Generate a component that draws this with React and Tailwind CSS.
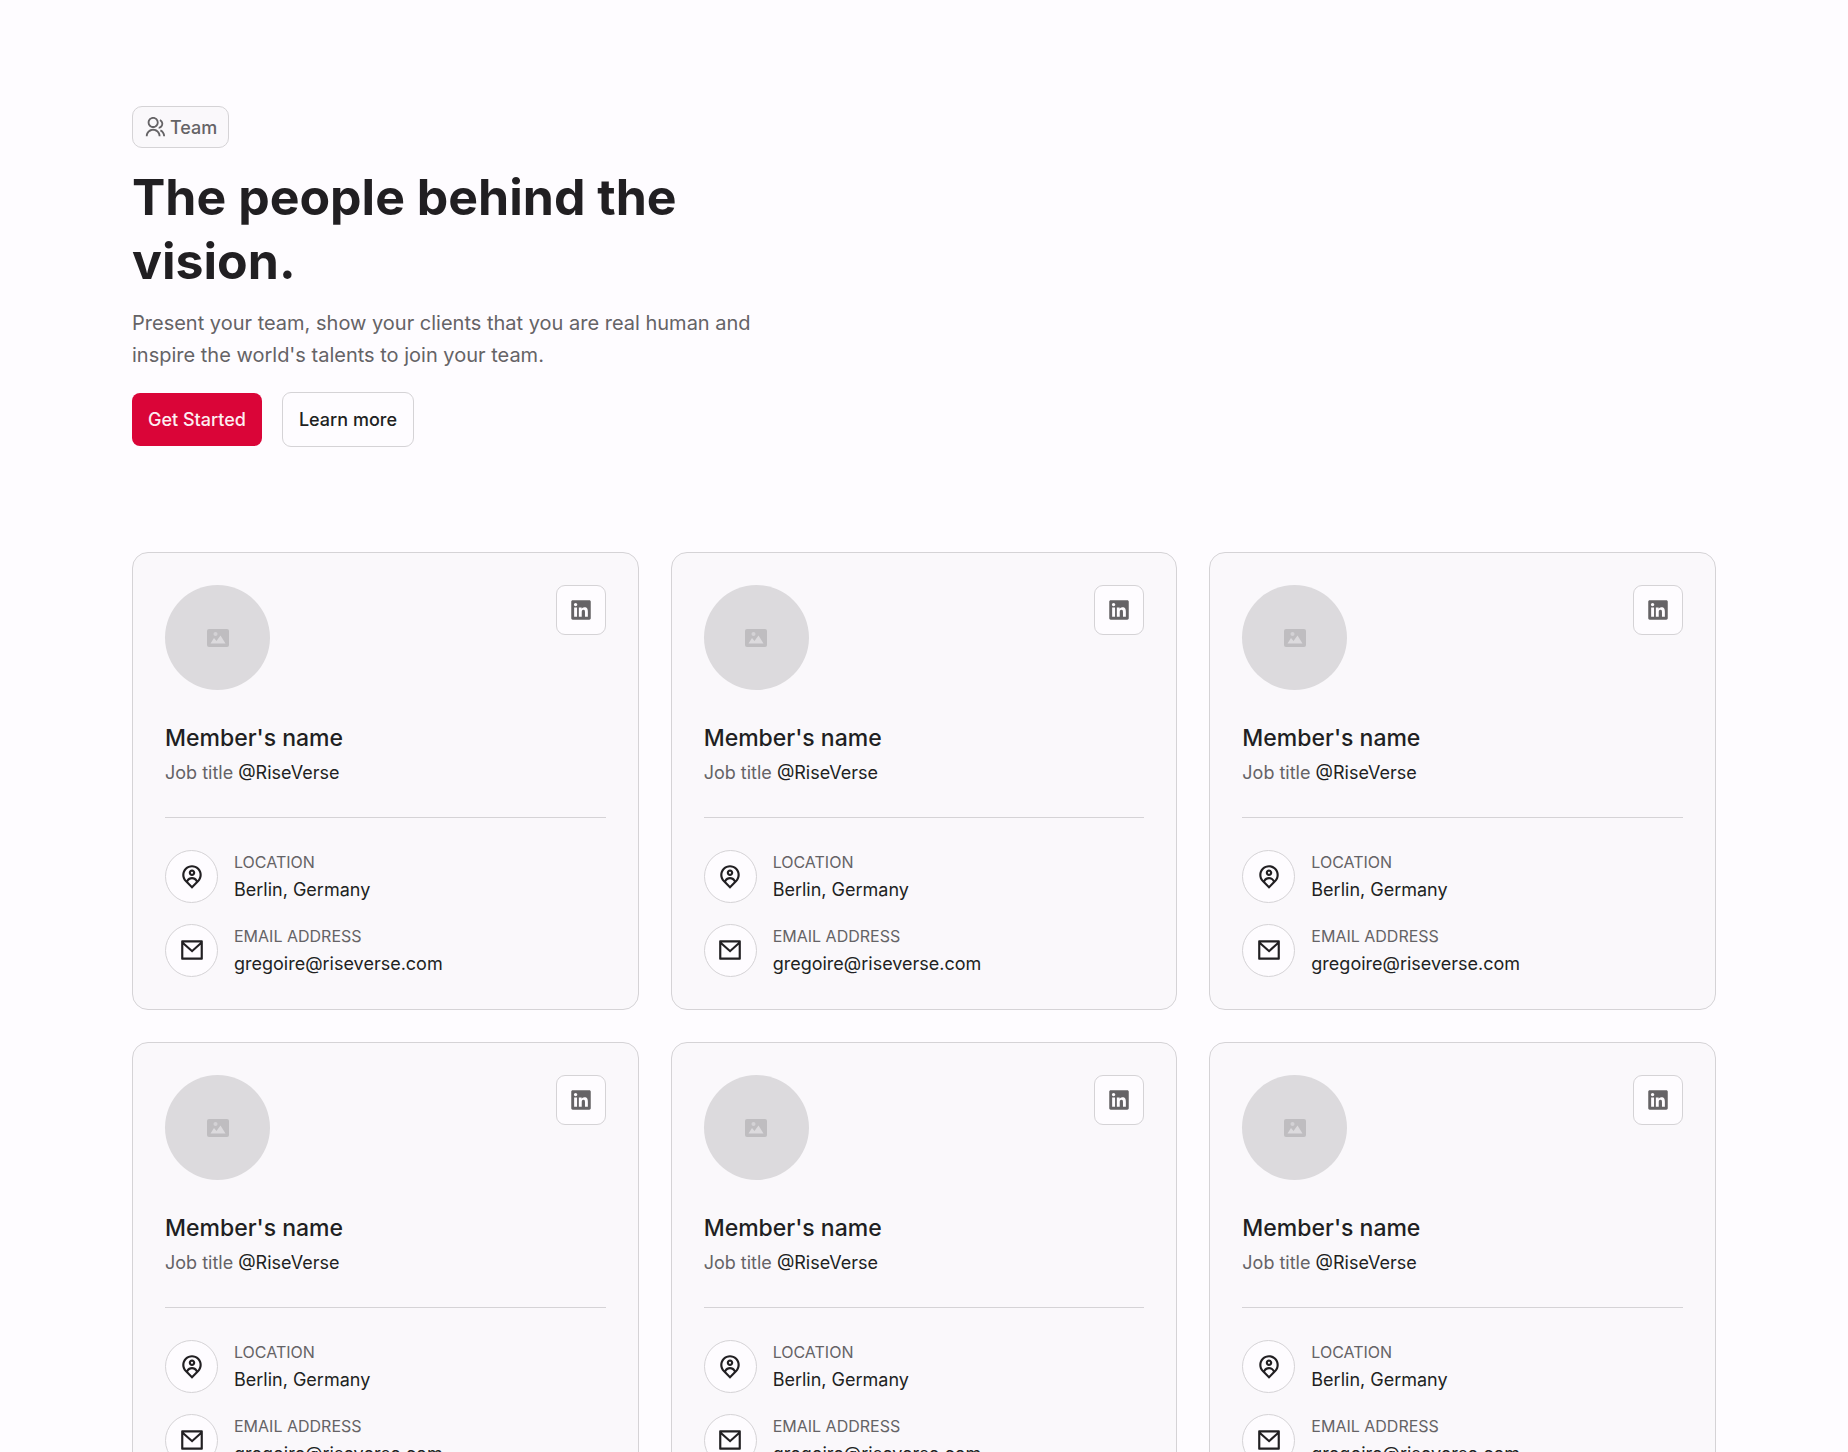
import React from "react";
import { RiGroupLine, RiLinkedinBoxFill, RiMapPinUserLine, RiMailLine } from "react-icons/ri";

const members = Array.from({ length: 6 }, (_, id) => ({
  id,
  name: "Member's name",
  role: "Job title",
  company: "@RiseVerse",
  location: "Berlin, Germany",
  email: "gregoire@riseverse.com",
}));

function ImagePlaceholderIcon() {
  return (
    <svg viewBox="0 0 22 18" className="h-[18px] w-[22px]" aria-hidden="true">
      <rect width="22" height="18" rx="2" fill="#bfbdc0" />
      <circle cx="8.500" cy="5" r="2" fill="#d4d2d5" />
      <path fill="#dcdadd" d="M3.500 14.500L7 9L9.500 12L13.500 6.500L18.500 14.500Z" />
    </svg>
  );
}

function Detail({ icon: Icon, label, children }) {
  return (
    <div className="flex items-center gap-4">
      <span className="flex size-[53px] shrink-0 items-center justify-center rounded-full border border-[#d5d3d6] bg-[#fefcff]">
        <Icon className="size-[26px] text-[#211f22]" aria-hidden="true" />
      </span>
      <div className="flex flex-col">
        <dt className="text-[16px] leading-7 text-[#656366] uppercase">{label}</dt>
        <dd className="text-[18px] leading-7 text-[#211f22]">{children}</dd>
      </div>
    </div>
  );
}

function MemberCard({ member }) {
  return (
    <li className="flex flex-col rounded-[16px] border border-[#d5d3d6] bg-[#faf8fb] px-8 pt-8 pb-[31px]">
      <div className="flex items-start justify-between">
        <div className="flex size-[105px] items-center justify-center rounded-full bg-[#dcdadd]">
          <ImagePlaceholderIcon />
        </div>
        <a
          href="#linkedin"
          aria-label={`${member.name} on LinkedIn`}
          className="flex size-[50px] items-center justify-center rounded-[9px] border border-[#d5d3d6] bg-[#fefcff] text-[#656366]"
        >
          <RiLinkedinBoxFill className="size-[26px]" aria-hidden="true" />
        </a>
      </div>
      <h2 className="mt-8 text-[23px] leading-8 font-medium text-[#211f22]">{member.name}</h2>
      <p className="mt-[3px] text-[18px] leading-8 text-[#656366]">
        {member.role} <span className="text-[#211f22]">{member.company}</span>
      </p>
      <hr className="mt-7 mb-[30px] border-[#d5d3d6]" />
      <dl className="flex flex-col gap-[18px]">
        <Detail icon={RiMapPinUserLine} label="Location">{member.location}</Detail>
        <Detail icon={RiMailLine} label="Email address">{member.email}</Detail>
      </dl>
    </li>
  );
}

export default function App() {
  return (
    <div className="min-h-screen bg-[#fefcff] font-['Inter',sans-serif] text-[#211f22]">
      <main className="mx-auto flex w-6/7 flex-col gap-[105px] py-[106px]">
        <header className="flex max-w-[640px] flex-col items-start">
          <span className="flex h-[42px] items-center gap-1 rounded-[10px] border border-[#d5d3d6] bg-[#faf8fb] px-[11px] text-[18px] font-medium text-[#656366]">
            <RiGroupLine className="size-[22px]" aria-hidden="true" />
            Team
          </span>
          <h1 className="mt-[17px] text-[50px] leading-16 font-bold">The people behind the vision.</h1>
          <p className="mt-[14px] text-[20px] leading-8 text-[#656366]">
            Present your team, show your clients that you are real human and inspire the world's talents to join your team.
          </p>
          <div className="mt-[21px] flex items-center gap-5">
            <button type="button" className="h-[53px] rounded-[8px] bg-[#da0538] px-4 text-[18px] font-medium text-[#fdeef1]">
              Get Started
            </button>
            <button type="button" className="h-[55px] rounded-[9px] border border-[#d5d3d6] bg-[#fefcff] px-4 text-[18px] font-medium">
              Learn more
            </button>
          </div>
        </header>
        <ul className="grid grid-cols-3 gap-8">
          {members.map((member) => (
            <MemberCard key={member.id} member={member} />
          ))}
        </ul>
      </main>
    </div>
  );
}
